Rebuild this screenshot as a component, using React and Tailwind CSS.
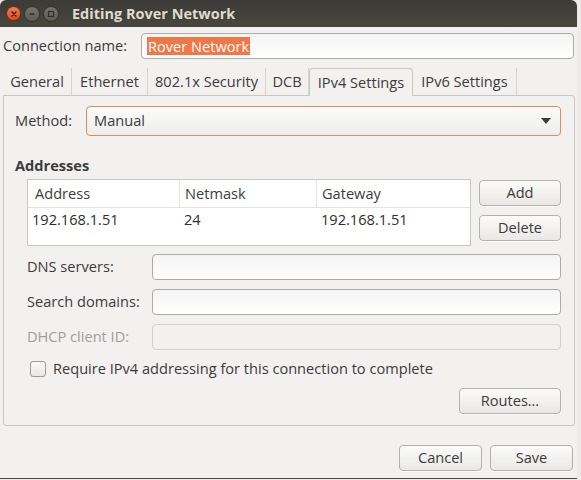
import React from "react";

const font = { fontFamily: '"Open Sans", "Noto Sans", sans-serif' };

function Btn({ children, className = "" }) {
  return (
    <div
      className={
        "flex items-center justify-center rounded-[4px] border border-[#b4b2ad] bg-gradient-to-b from-[#fbfbfa] to-[#e9e8e6] text-[14.6px] text-[#3c3c3c] shadow-[0_1px_0_rgba(255,255,255,0.8)] " +
        className
      }
    >
      {children}
    </div>
  );
}

function Field({ className = "", disabled = false, children }) {
  return (
    <div
      className={
        "h-[26px] rounded-[4px] border " +
        (disabled
          ? "border-[#d3d1cc] bg-[#f2f1f0] "
          : "border-[#aeaca7] bg-gradient-to-b from-[#f4f4f4] to-[#ffffff] ") +
        className
      }
    >
      {children}
    </div>
  );
}

function Tab({ w, label, active }) {
  if (active) {
    return (
      <div
        className={`${w} h-[28px] -mb-px flex items-center justify-center rounded-t-[4px] border border-b-0 border-[#c9c7c2] bg-[#f2f1f0] text-[14.6px] text-[#3c3c3c] relative z-10`}
      >
        {label}
      </div>
    );
  }
  return (
    <div className={`${w} h-[27px] flex items-center justify-center border-r border-[#d6d4cf] text-[14.6px] text-[#3c3c3c]`}>
      {label}
    </div>
  );
}

export default function App() {
  return (
    <div className="w-[581px] h-[480px] bg-[#ecebea] overflow-hidden" style={font}>
      <div className="w-[577px] h-[479px] flex flex-col rounded-t-[6px] overflow-hidden border-b border-[#4a4a48] bg-[#f2f1f0]">
        {/* Title bar */}
        <div className="h-[27px] flex items-center bg-gradient-to-b from-[#3c3b37] to-[#47463f]">
          <div className="ml-[6px] w-[15px] h-[15px] rounded-full bg-gradient-to-b from-[#f27e55] to-[#df4a1b] border border-[#7a2b12] flex items-center justify-center">
            <svg width="8" height="8" viewBox="0 0 8 8">
              <path d="M2 2 L6 6 M6 2 L2 6" stroke="#3c1a0e" strokeWidth="1.4" strokeLinecap="round" />
            </svg>
          </div>
          <div className="ml-[3px] w-[16px] h-[16px] rounded-full bg-gradient-to-b from-[#74736e] to-[#5c5b56] border border-[#35342f] flex items-center justify-center">
            <svg width="8" height="8" viewBox="0 0 8 8">
              <path d="M1.5 4 L6.5 4" stroke="#2f2e2a" strokeWidth="1.4" />
            </svg>
          </div>
          <div className="ml-[3px] w-[16px] h-[16px] rounded-full bg-gradient-to-b from-[#74736e] to-[#5c5b56] border border-[#35342f] flex items-center justify-center">
            <svg width="8" height="8" viewBox="0 0 8 8">
              <rect x="1.5" y="1.5" width="5" height="5" fill="none" stroke="#2f2e2a" strokeWidth="1.2" />
            </svg>
          </div>
          <div className="ml-[13px] text-[14.5px] font-bold text-[#dfdbd2]">Editing Rover Network</div>
        </div>

        {/* Connection name */}
        <div className="mt-[6px] flex items-center">
          <div className="ml-[3px] w-[138px] text-[14.6px] text-[#3c3c3c]">Connection name:</div>
          <Field className="w-[433px] flex items-center px-[5px]">
            <span className="bg-[#f07746] text-white text-[14.6px] leading-[18px] px-[1px]">Rover Network</span>
          </Field>
        </div>

        {/* Tabs */}
        <div className="mt-[9px] ml-[3px] flex items-end">
          <Tab w="w-[69px]" label="General" />
          <Tab w="w-[76px]" label="Ethernet" />
          <Tab w="w-[118px]" label="802.1x Security" />
          <Tab w="w-[43px]" label="DCB" />
          <Tab w="w-[104px]" label="IPv4 Settings" active />
          <Tab w="w-[104px]" label="IPv6 Settings" />
        </div>

        {/* Notebook panel */}
        <div className="ml-[3px] w-[572px] h-[331px] border border-[#c9c7c2] rounded-b-[3px] rounded-tr-[3px] flex flex-col text-[#3c3c3c]">
          {/* Method */}
          <div className="mt-[10px] flex items-center">
            <div className="ml-[11px] w-[71px] text-[14.6px]">Method:</div>
            <div className="w-[475px] h-[30px] rounded-[4px] border border-[#de8a68] bg-gradient-to-b from-[#fbfbfa] to-[#eeedeb] flex items-center justify-between px-[7px]">
              <span className="text-[14.6px]">Manual</span>
              <svg width="10" height="6" viewBox="0 0 10 6" className="mr-[2px]">
                <path d="M0 0 L10 0 L5 6 Z" fill="#3c3c3c" />
              </svg>
            </div>
          </div>

          <div className="mt-[20px] ml-[11px] text-[14.6px] font-bold leading-[18px]">Addresses</div>

          {/* Table and buttons */}
          <div className="mt-[5px] ml-[23px] flex">
            <div className="w-[444px] h-[67px] border border-[#c9c7c2] bg-white flex flex-col">
              <div className="h-[28px] flex border-b border-[#e4e3e0] text-[14.6px]">
                <div className="w-[152px] border-r border-[#e4e3e0] pl-[7px] flex items-center">Address</div>
                <div className="w-[137px] border-r border-[#e4e3e0] pl-[5px] flex items-center">Netmask</div>
                <div className="flex-1 pl-[5px] flex items-center">Gateway</div>
              </div>
              <div className="flex text-[14.6px] text-[#2e2e2e] pt-[1px]">
                <div className="w-[152px] pl-[4px]">192.168.1.51</div>
                <div className="w-[137px] pl-[4px]">24</div>
                <div className="flex-1 pl-[4px]">192.168.1.51</div>
              </div>
            </div>
            <div className="ml-[8px] flex flex-col">
              <Btn className="mt-[1px] w-[82px] h-[26px]">Add</Btn>
              <Btn className="mt-[9px] w-[82px] h-[26px]">Delete</Btn>
            </div>
          </div>

          {/* DNS etc */}
          <div className="mt-[8px] ml-[23px] flex items-center">
            <div className="w-[125px] text-[14.6px]">DNS servers:</div>
            <Field className="w-[409px]" />
          </div>
          <div className="mt-[9px] ml-[23px] flex items-center">
            <div className="w-[125px] text-[14.6px]">Search domains:</div>
            <Field className="w-[409px]" />
          </div>
          <div className="mt-[9px] ml-[23px] flex items-center">
            <div className="w-[125px] text-[14.6px] text-[#a09f9b]">DHCP client ID:</div>
            <Field className="w-[409px]" disabled />
          </div>

          <div className="mt-[11px] ml-[26px] flex items-center h-[16px]">
            <div className="w-[16px] h-[16px] rounded-[3px] border border-[#9d9b96] bg-gradient-to-b from-[#fafafa] to-[#e8e7e5]" />
            <div className="ml-[7px] text-[14.6px]">Require IPv4 addressing for this connection to complete</div>
          </div>

          <div className="mt-[11px] flex justify-end pr-[13px]">
            <Btn className="w-[102px] h-[26px]">Routes…</Btn>
          </div>
        </div>

        {/* Bottom buttons */}
        <div className="mt-[19px] flex justify-end pr-[4px]">
          <Btn className="w-[83px] h-[26px]">Cancel</Btn>
          <Btn className="ml-[8px] w-[83px] h-[26px]">Save</Btn>
        </div>
      </div>
    </div>
  );
}
